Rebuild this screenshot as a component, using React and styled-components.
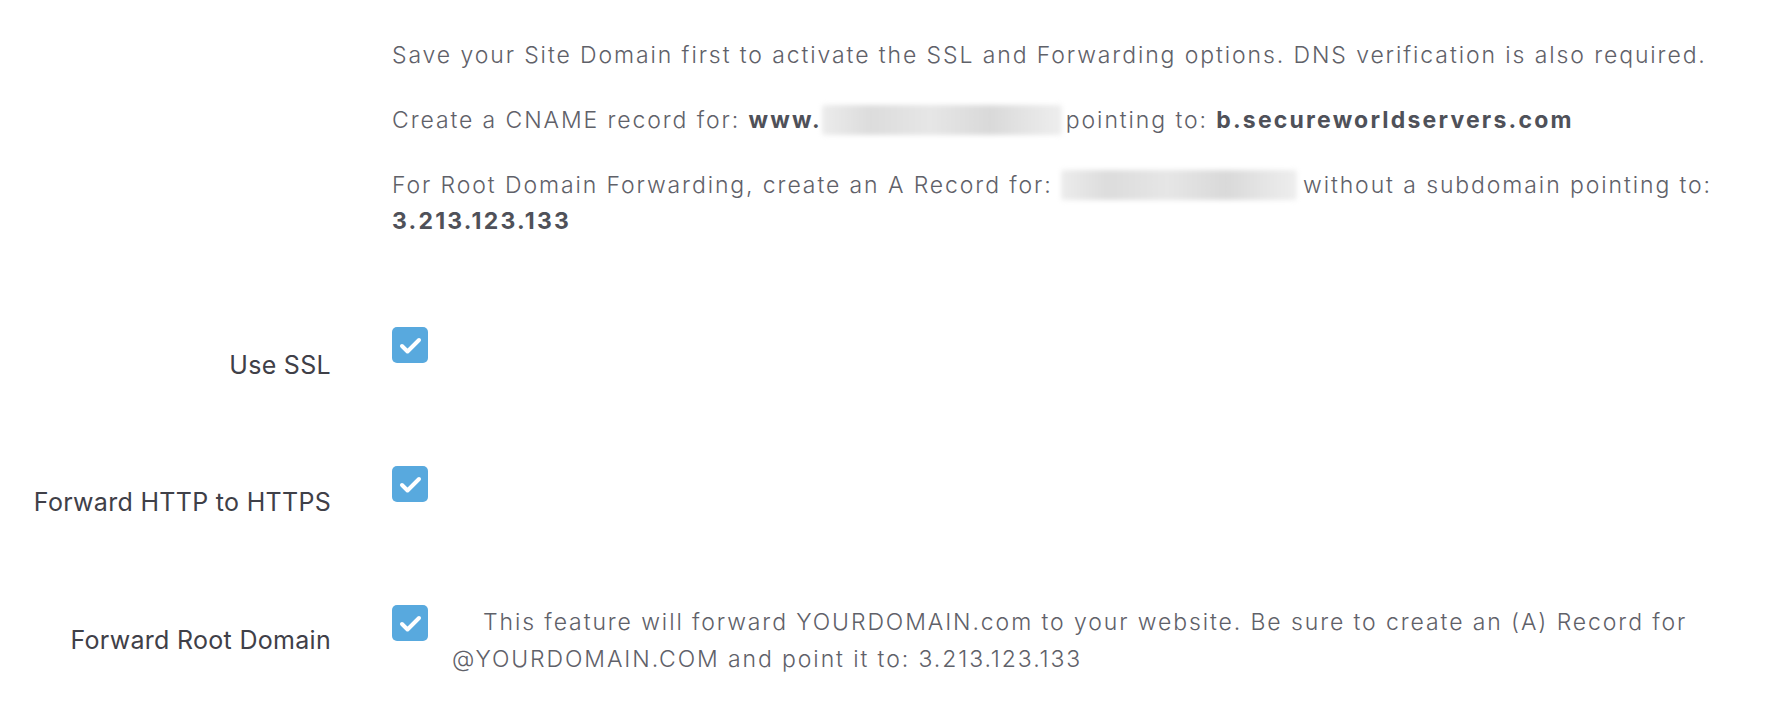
import React from "react";
import styled, { createGlobalStyle } from "styled-components";

const Global = createGlobalStyle`
  html, body { margin: 0; padding: 0; background: #ffffff; }
  body { font-family: Inter, "Noto Sans", sans-serif; }
`;

const Page = styled.div`
  width: 1788px;
  height: 712px;
  box-sizing: border-box;
  padding-top: 37px;
  display: flex;
  flex-direction: column;
`;

const Info = styled.div`
  margin-left: 392px;
  width: 1375px;
  font-size: 23px;
  line-height: 36px;
  font-weight: 300;
  color: #5f6169;
  letter-spacing: 1.9px;
`;

const Para = styled.p`
  margin: 0 0 29px 0;
  &:last-child { margin-bottom: 0; }
`;

const Strong = styled.b`
  font-weight: 700;
  color: #4f5159;
  letter-spacing: 2.2px;
`;

const Blur = styled.span`
  display: inline-block;
  width: ${(p) => p.$w}px;
  height: 30px;
  vertical-align: -7px;
  margin: 0 ${(p) => p.$mr || 4}px 0 ${(p) => p.$ml || 0}px;
  background: linear-gradient(90deg, #ececec, #dcdcdc 20%, #e6e6e6 45%, #d9d9d9 70%, #e4e4e4 85%, #eeeeee);
  filter: blur(2.5px);
  border-radius: 3px;
`;

const Rows = styled.div`
  margin-top: 88px;
  display: flex;
  flex-direction: column;
  gap: 86px;
`;

const Row = styled.div`
  display: grid;
  grid-template-columns: 331px 1fr;
  grid-template-rows: 53px;
  column-gap: 61px;
  align-items: start;
`;

const Label = styled.div`
  text-align: right;
  padding-top: ${(p) => p.$pt || 17}px;
  font-size: 25px;
  line-height: 36px;
  font-weight: 400;
  color: #3f4048;
  letter-spacing: 0.3px;
  white-space: nowrap;
`;

const Control = styled.div`
  display: flex;
  align-items: flex-start;
`;

const Box = styled.span`
  flex: none;
  width: 36px;
  height: 36px;
  border-radius: 5px;
  background: #58a9de;
  display: flex;
  align-items: center;
  justify-content: center;
`;

const Note = styled.div`
  margin-left: 24px;
  width: 1300px;
  text-indent: 31px;
  font-size: 23px;
  line-height: 37px;
  font-weight: 300;
  color: #5f6169;
  letter-spacing: 1.9px;
  margin-top: -1px;
`;

function Check() {
  return (
    <Box>
      <svg width="36" height="36" viewBox="0 0 36 36">
        <polyline
          points="10,19 15.5,24.5 27,13"
          fill="none"
          stroke="#ffffff"
          strokeWidth="4"
          strokeLinecap="round"
          strokeLinejoin="round"
        />
      </svg>
    </Box>
  );
}

export default function App() {
  return (
    <>
      <Global />
      <Page>
        <Info>
          <Para>
            Save your Site Domain first to activate the SSL and Forwarding options. DNS verification is also required.
          </Para>
          <Para>
            Create a CNAME record for: <Strong>www.</Strong>
            <Blur $w={240} />
            pointing to: <Strong>b.secureworldservers.com</Strong>
          </Para>
          <Para>
            For Root Domain Forwarding, create an A Record for: <Blur $w={236} $mr={6} />
            without a subdomain pointing to: <Strong>3.213.123.133</Strong>
          </Para>
        </Info>
        <Rows>
          <Row>
            <Label $pt={20}>Use SSL</Label>
            <Control>
              <Check />
            </Control>
          </Row>
          <Row>
            <Label $pt={18}>Forward HTTP to HTTPS</Label>
            <Control>
              <Check />
            </Control>
          </Row>
          <Row>
            <Label $pt={17}>Forward Root Domain</Label>
            <Control>
              <Check />
              <Note>
                This feature will forward YOURDOMAIN.com to your website. Be sure to create an (A) Record for
                @YOURDOMAIN.COM and point it to: 3.213.123.133
              </Note>
            </Control>
          </Row>
        </Rows>
      </Page>
    </>
  );
}
